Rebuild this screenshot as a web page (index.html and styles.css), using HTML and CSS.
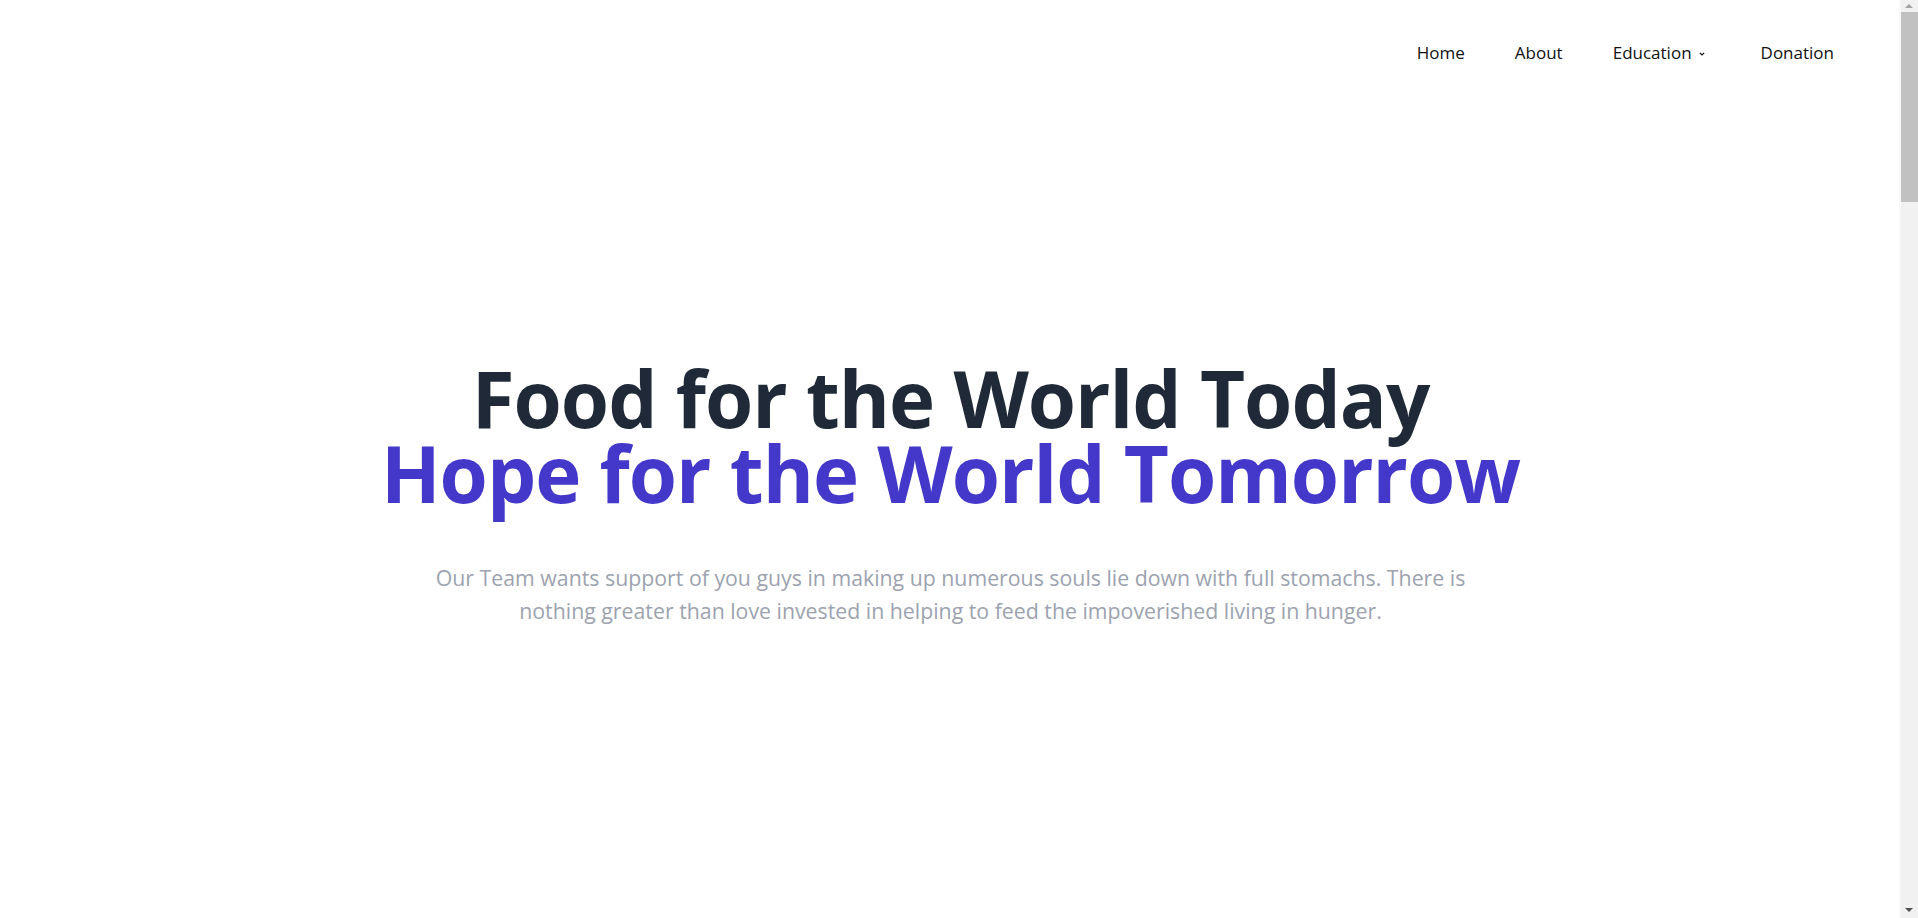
FILE: index.html
```html
<!DOCTYPE html>
<html lang="en">
<head>
<meta charset="utf-8">
<title>Food for the World</title>
<link rel="stylesheet" href="styles.css">
</head>
<body>
<div class="page">
  <header class="topbar">
    <nav class="nav">
      <a class="nav-link" href="#">Home</a>
      <a class="nav-link" href="#">About</a>
      <a class="nav-link nav-drop" href="#">Education
        <svg class="chev" width="6" height="4" viewBox="0 0 6 4"><path d="M0.8 0.8 L3 3 L5.2 0.8" fill="none" stroke="#111" stroke-width="1.2"/></svg>
      </a>
      <a class="nav-link" href="#">Donation</a>
    </nav>
  </header>
  <main class="hero">
    <h1 class="title">
      <span class="line dark">Food for the World Today</span>
      <span class="line accent">Hope for the World Tomorrow</span>
    </h1>
    <p class="lead">Our Team wants support of you guys in making up numerous souls lie down with full stomachs. There is<br>nothing greater than love invested in helping to feed the impoverished living in hunger.</p>
  </main>
</div>
<div class="scrollbar" aria-hidden="true">
  <span class="sb-arrow sb-up"></span>
  <span class="sb-thumb"></span>
  <span class="sb-arrow sb-down"></span>
</div>
</body>
</html>
```
FILE: styles.css
```css
html, body {
  margin: 0;
  padding: 0;
  background: #fff;
  overflow: hidden;
}
body {
  font-family: "Open Sans", "Noto Sans", sans-serif;
}
.page {
  margin-right: 17px;
  height: 918px;
}
.topbar {
  display: flex;
  justify-content: flex-end;
  padding: 32px 67px 0 0;
  height: 59px;
}
.nav {
  display: flex;
  align-items: center;
  gap: 50px;
  height: 40px;
}
.nav-link {
  color: #111;
  text-decoration: none;
  font-size: 17px;
  font-weight: 500;
  display: flex;
  align-items: center;
  gap: 7px;
}
.nav-drop { margin-right: 6px; }
.chev { margin-top: 3px; }
.hero {
  display: flex;
  flex-direction: column;
  align-items: center;
  padding-top: 270px;
}
.title {
  margin: 0;
  display: flex;
  flex-direction: column;
  align-items: center;
  font-size: 78px;
  line-height: 75px;
  font-weight: 700;
  letter-spacing: -1px;
}
.line { display: block; }
.dark { color: #1f2937; }
.accent { color: #4338ca; }
.lead {
  margin: 50px 0 0;
  text-align: center;
  color: #9ca3af;
  font-size: 21.3px;
  line-height: 33px;
}
.scrollbar {
  position: fixed;
  top: 0;
  right: 0;
  width: 17px;
  height: 918px;
  background: #f1f1f1;
  border-left: 2px solid #f8f8f8;
}
.sb-thumb {
  position: absolute;
  left: 0;
  top: 12px;
  width: 17px;
  height: 190px;
  background: #c1c1c1;
}
.sb-arrow {
  position: absolute;
  left: 4px;
  width: 0;
  height: 0;
  border-left: 4px solid transparent;
  border-right: 4px solid transparent;
}
.sb-up {
  top: 4px;
  border-bottom: 4px solid #a3a3a3;
}
.sb-down {
  bottom: 6px;
  border-top: 4px solid #505050;
}
```
